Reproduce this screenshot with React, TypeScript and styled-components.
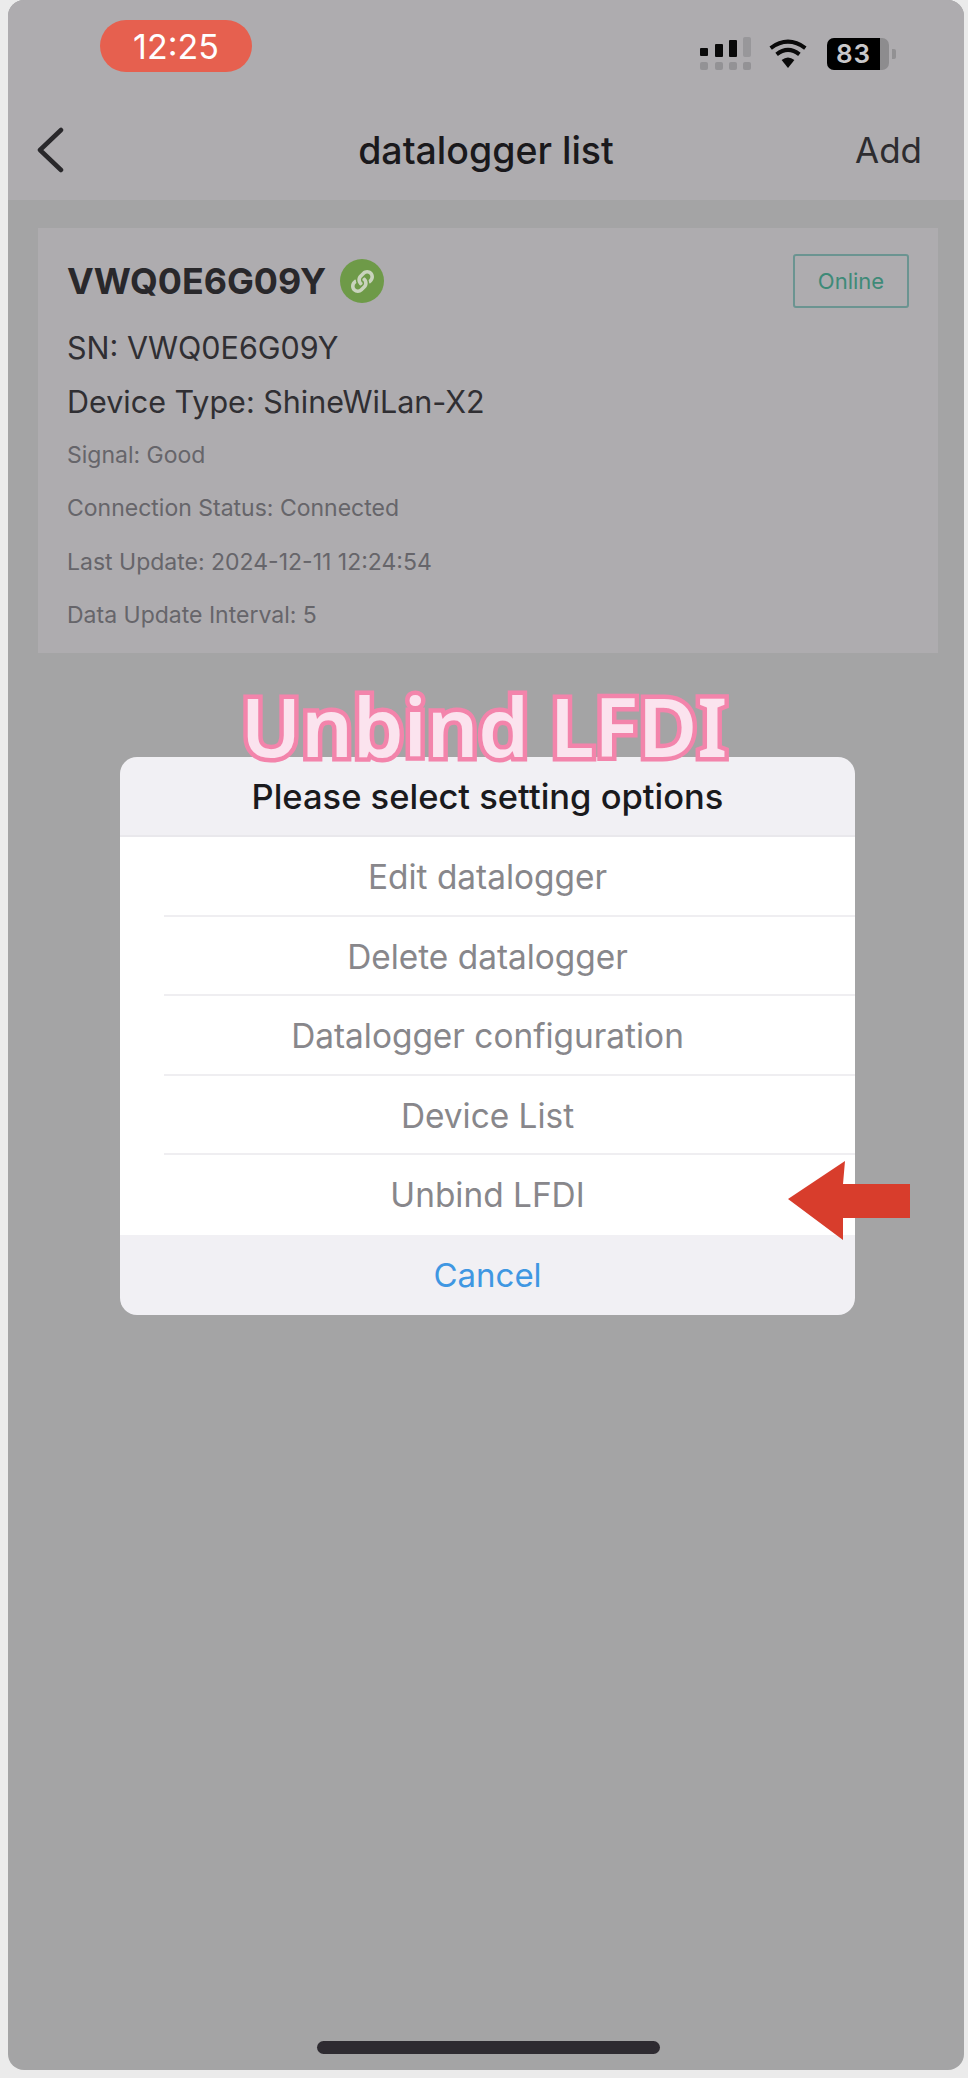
import styled, { createGlobalStyle } from "styled-components";
import { FaLink } from "react-icons/fa";

const GlobalStyle = createGlobalStyle`
  html, body {
    margin: 0;
    padding: 0;
    background: #ebebeb;
  }
  * {
    box-sizing: border-box;
  }
`;

const Screen = styled.div`
  width: 968px;
  height: 2078px;
  padding: 0 4px 8px 8px;
  background: #ebebeb;
  font-family: Inter, "Liberation Sans", sans-serif;
  overflow: hidden;
`;

const Phone = styled.div`
  position: relative;
  height: 100%;
  display: flex;
  flex-direction: column;
  border-radius: 16px;
  background: #a4a4a5;
  overflow: hidden;
`;

const TopArea = styled.header`
  height: 200px;
  background: #aeacaf;
  display: flex;
  flex-direction: column;
`;

const StatusBar = styled.div`
  height: 100px;
  display: flex;
  align-items: flex-start;
  justify-content: space-between;
  padding: 20px 68px 0 92px;
`;

const TimePill = styled.div`
  width: 152px;
  height: 52px;
  border-radius: 26px;
  background: #e6604f;
  color: #fff;
  font-size: 34px;
  display: flex;
  align-items: center;
  justify-content: center;
`;

const StatusIcons = styled.div`
  display: flex;
  align-items: center;
  padding-top: 17px;
`;

const WifiGlyph = styled.svg`
  margin-left: 16px;
`;

const Battery = styled.div`
  width: 62px;
  height: 32px;
  margin-left: 18px;
  display: flex;
  border-radius: 7px;
  background: #8d8c8e;
`;

const BatteryFill = styled.div`
  width: 53px;
  border-radius: 7px 0 0 7px;
  background: #000;
  color: #c9c8ca;
  font-size: 26px;
  font-weight: 600;
  letter-spacing: 1px;
  line-height: 32px;
  text-align: center;
`;

const BatteryTip = styled.div`
  width: 4px;
  height: 10px;
  margin-left: 3px;
  background: #929193;
  border-radius: 0 2px 2px 0;
`;

const NavBar = styled.nav`
  flex: 1;
  display: flex;
  align-items: center;
  justify-content: space-between;
  padding: 0 42px 0 28px;
  position: relative;
`;

const NavTitle = styled.h1`
  position: absolute;
  left: 0;
  right: 0;
  margin: 0;
  text-align: center;
  font-size: 37.5px;
  font-weight: 500;
  color: #1a191c;
`;

const NavAction = styled.span`
  font-size: 35px;
  color: #2d2c30;
`;

const Body = styled.main`
  flex: 1;
  padding: 28px 26px 0 30px;
`;

const Card = styled.section`
  height: 425px;
  background: #aeacaf;
  padding: 26px 29px 0 29px;
`;

const CardHead = styled.div`
  display: flex;
  align-items: flex-start;
  justify-content: space-between;
  height: 67px;
`;

const NameRow = styled.div`
  display: flex;
  align-items: center;
  gap: 14px;
  height: 54px;
`;

const DeviceName = styled.h2`
  margin: 0;
  font-size: 35.8px;
  font-weight: 700;
  color: #29282b;
`;

const LinkBadge = styled.span`
  width: 44px;
  height: 44px;
  border-radius: 50%;
  background: #6e9a48;
  color: #c9d3bd;
  font-size: 23px;
  display: flex;
  align-items: center;
  justify-content: center;
`;

const StatusTag = styled.span`
  width: 116px;
  height: 54px;
  border: 2px solid #6b9491;
  border-radius: 3px;
  color: #3e8a78;
  font-size: 22px;
  display: flex;
  align-items: center;
  justify-content: center;
`;

const InfoLine = styled.p`
  margin: 0;
  height: 54px;
  line-height: 54px;
  font-size: 30.5px;
  color: #302f33;
`;

const DetailLine = styled.p`
  margin: 0;
  height: 53.3px;
  line-height: 53.3px;
  font-size: 23px;
  color: #66656a;
`;

const Dialog = styled.div`
  position: absolute;
  left: 112px;
  top: 757px;
  width: 735px;
  border-radius: 17px;
  overflow: hidden;
  background: #f1f0f4;
  text-align: center;
`;

const DialogTitle = styled.div`
  height: 80px;
  line-height: 80px;
  font-size: 34.5px;
  font-weight: 500;
  color: #1a1a1d;
  border-bottom: 2px solid #e9e8ec;
`;

const OptionList = styled.ul`
  margin: 0;
  padding: 0;
  list-style: none;
  background: #fff;
`;

const Option = styled.li`
  height: 79.6px;
  margin-left: 44px;
  padding-right: 44px;
  line-height: 81px;
  font-size: 33.4px;
  color: #88878b;
  border-bottom: 2px solid #efeef1;

  &:last-child {
    border-bottom: none;
  }
`;

const CancelButton = styled.div`
  height: 80px;
  line-height: 80px;
  font-size: 33px;
  color: #3f97e2;
`;

const Caption = styled.div`
  position: absolute;
  left: 0;
  right: 4px;
  top: 676px;
  text-align: center;
  font-family: "Noto Sans", Roboto, sans-serif;
  font-size: 81px;
  line-height: 100px;
  font-weight: 600;
  color: #fbe3ee;
  -webkit-text-stroke: 9px #f384ab;
  paint-order: stroke fill;
  filter: blur(0.6px);
`;

const ArrowMark = styled.svg`
  position: absolute;
  left: 780px;
  top: 1160px;
  width: 134px;
  height: 82px;
`;

const HomeIndicator = styled.div`
  position: absolute;
  left: 309px;
  bottom: 16px;
  width: 343px;
  height: 13px;
  border-radius: 7px;
  background: #2e2b31;
`;

const options = [
  "Edit datalogger",
  "Delete datalogger",
  "Datalogger configuration",
  "Device List",
  "Unbind LFDI",
];

const details = [
  "Signal: Good",
  "Connection Status: Connected",
  "Last Update: 2024-12-11 12:24:54",
  "Data Update Interval: 5",
];

function SignalIcon() {
  return (
    <svg width="51" height="33" viewBox="0 0 51 33">
      <rect x="0" y="11" width="8" height="8" rx="1" fill="#0a0a0a" />
      <rect x="15" y="7" width="8" height="13" rx="1" fill="#0a0a0a" />
      <rect x="29" y="3" width="8" height="17" rx="1" fill="#0a0a0a" />
      <rect x="43" y="0" width="8" height="20" rx="2" fill="#98979a" />
      <rect x="0" y="25" width="8" height="8" rx="2" fill="#939295" />
      <rect x="15" y="25" width="8" height="8" rx="2" fill="#939295" />
      <rect x="29" y="25" width="8" height="8" rx="2" fill="#939295" />
      <rect x="43" y="25" width="8" height="8" rx="2" fill="#939295" />
    </svg>
  );
}

function WifiIcon() {
  return (
    <WifiGlyph width="42" height="31" viewBox="0 0 42 34" fill="none" stroke="#0a0a0a" strokeWidth="4.4">
      <path d="M2 11 Q21 -3 40 11" />
      <path d="M8.5 18 Q21 8 33.5 18" />
      <path d="M14 24 L21 33 L28 24 Q21 18.5 14 24 Z" fill="#0a0a0a" stroke="none" />
    </WifiGlyph>
  );
}

export default function App() {
  return (
    <Screen>
      <GlobalStyle />
      <Phone>
        <TopArea>
          <StatusBar>
            <TimePill>12:25</TimePill>
            <StatusIcons>
              <SignalIcon />
              <WifiIcon />
              <Battery>
                <BatteryFill>83</BatteryFill>
              </Battery>
              <BatteryTip />
            </StatusIcons>
          </StatusBar>
          <NavBar>
            <svg width="30" height="46" viewBox="0 0 30 46" fill="none" stroke="#29282b" strokeWidth="4.5" strokeLinecap="round" strokeLinejoin="round">
              <path d="M25 3 L4 23 L25 43" />
            </svg>
            <NavTitle>datalogger list</NavTitle>
            <NavAction>Add</NavAction>
          </NavBar>
        </TopArea>
        <Body>
          <Card>
            <CardHead>
              <NameRow>
                <DeviceName>VWQ0E6G09Y</DeviceName>
                <LinkBadge>
                  <FaLink />
                </LinkBadge>
              </NameRow>
              <StatusTag>Online</StatusTag>
            </CardHead>
            <InfoLine>SN: VWQ0E6G09Y</InfoLine>
            <InfoLine>Device Type: ShineWiLan-X2</InfoLine>
            {details.map((line) => (
              <DetailLine key={line}>{line}</DetailLine>
            ))}
          </Card>
        </Body>
        <Dialog>
          <DialogTitle>Please select setting options</DialogTitle>
          <OptionList>
            {options.map((option) => (
              <Option key={option}>{option}</Option>
            ))}
          </OptionList>
          <CancelButton>Cancel</CancelButton>
        </Dialog>
        <Caption>Unbind LFDI</Caption>
        <ArrowMark viewBox="0 0 134 82">
          <path d="M0 39 L57 1 L55 24 L122 24 L122 58 L55 58 L55 80 Z" fill="#d83d2c" />
        </ArrowMark>
        <HomeIndicator />
      </Phone>
    </Screen>
  );
}
